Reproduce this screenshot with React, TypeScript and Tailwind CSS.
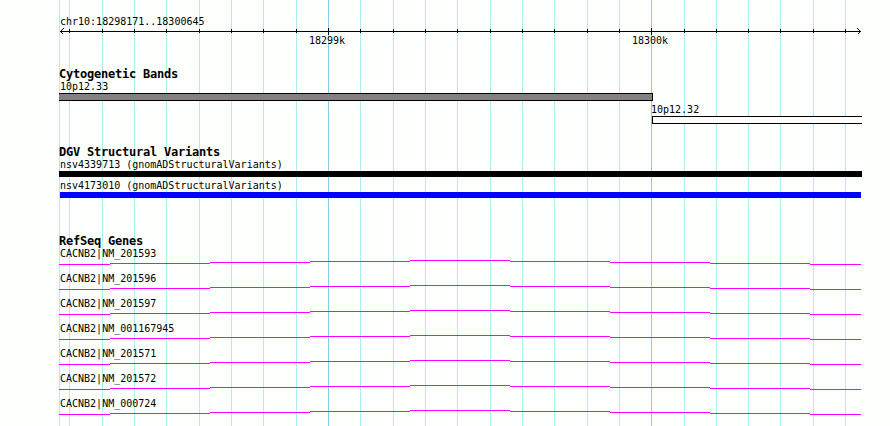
const LEFT = 59;

const gridLines = [
  59, 69, 102, 134, 166, 199, 231, 263, 296, 328, 360, 393, 425, 457, 490, 522,
  554, 587, 619, 651, 684, 716, 748, 780, 813, 845,
];
const majorLines = [328, 651];

const genes = [
  "NM_201593",
  "NM_201596",
  "NM_201597",
  "NM_001167945",
  "NM_201571",
  "NM_201572",
  "NM_000724",
];

// x, width, y of every step of the intron line
const intronSteps = [
  [0, 51, 4],
  [51, 100, 3],
  [151, 100, 2],
  [251, 100, 1],
  [351, 100, 0],
  [451, 100, 1],
  [551, 100, 2],
  [651, 100, 3],
  [751, 51, 4],
];

const Label = ({ text }: { text: string }) => (
  <div className="h-3 pl-px font-['DejaVu_Sans_Mono',monospace] text-[10px] leading-[13px] whitespace-pre">
    {text}
  </div>
);

const Heading = ({ text }: { text: string }) => (
  <h2 className="h-3 font-['DejaVu_Sans_Mono',monospace] text-[12px] leading-[13px] font-bold tracking-[-0.22px] whitespace-pre">
    {text}
  </h2>
);

const Grid = () => (
  <svg
    className="absolute inset-0"
    width="890"
    height="426"
    shapeRendering="crispEdges"
  >
    {gridLines.map((x) => (
      <rect
        key={x}
        x={x}
        y={0}
        width={1}
        height={426}
        fill={majorLines.includes(x) ? "#87ceeb" : "#afeeee"}
      />
    ))}
  </svg>
);

const Ruler = () => (
  <svg
    className="block"
    width="803"
    height="7"
    shapeRendering="crispEdges"
  >
    <rect x={1} y={3} width={801} height={1} />
    {gridLines.slice(1).map((x) =>
      majorLines.includes(x) ? (
        <rect key={x} x={x - LEFT} y={0} width={1} height={7} />
      ) : (
        <rect key={x} x={x - LEFT} y={1} width={1} height={4} />
      )
    )}
    <path d="M4.5 0.5L1.5 3.5L4.5 6.5M798.5 0.5L801.5 3.5L798.5 6.5" fill="none" stroke="#000" />
  </svg>
);

const Gene = ({ id }: { id: string }) => (
  <div className="h-[25px]">
    <Label text={`CACNB2|${id}`} />
    <svg
      className="mt-px block"
      width="803"
      height="5"
      shapeRendering="crispEdges"
      fill="#ff00ff"
    >
      {intronSteps.map(([x, width, y]) => (
        <rect key={x} x={x} y={y} width={width} height={1} />
      ))}
    </svg>
  </div>
);

export default function App() {
  return (
    <div className="relative h-[426px] w-[890px] overflow-hidden bg-[#fcfffc] text-black">
      <Grid />
      <div className="relative flex flex-col pt-[15px] pl-[59px]">
        <Label text="chr10:18298171..18300645" />
        <div className="mt-px">
          <Ruler />
        </div>
        <div className="-mt-px flex h-3">
          <div className="w-[249px]" />
          <div className="w-[323px]">
            <Label text="18299k" />
          </div>
          <Label text="18300k" />
        </div>

        <section className="mt-[22px]">
          <Heading text="Cytogenetic Bands" />
          <Label text="10p12.33" />
          <div className="mt-px h-2 w-[594px] border border-l-0 border-black bg-[#848084]" />
          <div className="mt-[2px] ml-[591px] w-[212px]">
            <Label text="10p12.32" />
            <div className="mt-px ml-[2px] h-2 w-[210px] border border-r-0 border-black bg-white" />
          </div>
        </section>

        <section className="mt-[22px]">
          <Heading text="DGV Structural Variants" />
          <Label text="nsv4339713 (gnomADStructuralVariants)" />
          <div className="mt-px h-[6px] w-[803px] bg-black" />
          <div className="mt-[2px]">
            <Label text="nsv4173010 (gnomADStructuralVariants)" />
          </div>
          <div className="mt-px ml-px h-[6px] w-[801px] bg-[#0000ff]" />
        </section>

        <section className="mt-[37px]">
          <Heading text="RefSeq Genes" />
          {genes.map((id) => (
            <Gene key={id} id={id} />
          ))}
        </section>
      </div>
    </div>
  );
}
